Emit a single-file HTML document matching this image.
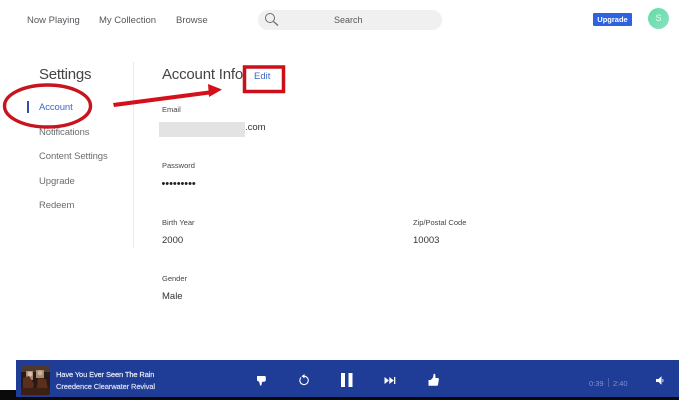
<!DOCTYPE html>
<html>
<head>
<meta charset="utf-8">
<style>
html,body{margin:0;padding:0;background:#fff}
body{width:679px;height:400px;position:relative;overflow:hidden;font-family:"Liberation Sans",sans-serif}
#w{position:absolute;left:0;top:0;width:679px;height:400px;background:#fff;filter:blur(.35px)}
.t{position:absolute;white-space:nowrap;line-height:1}
.nav{font-size:9.5px;color:#55585c;top:16px}
.side{font-size:9.5px;color:#6a6d70;left:39px;letter-spacing:-.1px}
.lab{font-size:7.5px;color:#444;left:162px}
.val{font-size:9.5px;color:#333}
svg{position:absolute;left:0;top:0}
</style>
</head>
<body>
<div id="w">
<div class="t nav" style="left:27px">Now Playing</div>
<div class="t nav" style="left:99px">My Collection</div>
<div class="t nav" style="left:176px">Browse</div>

<div style="position:absolute;left:258px;top:10px;width:184px;height:20px;border-radius:10px;background:#f0f0f1"></div>
<div class="t" style="left:334px;top:16px;font-size:9px;color:#55585c">Search</div>

<div class="t" style="left:593px;top:12.500px;width:39px;height:13px;background:#2f62e0;border-radius:1px;color:#fff;font-size:7.500px;font-weight:bold;text-align:center;line-height:13px">Upgrade</div>
<div class="t" style="left:648px;top:8px;width:21px;height:21px;border-radius:50%;background:linear-gradient(135deg,#66dba8,#88e2bf);color:#e8fbf2;font-size:9px;text-align:center;line-height:21px">S</div>

<div class="t" style="left:39px;top:67px;font-size:15px;color:#444;letter-spacing:-.25px">Settings</div>
<div class="t" style="left:162px;top:67px;font-size:15px;color:#444;letter-spacing:-.2px">Account Info</div>
<div class="t" style="left:254px;top:72px;font-size:9.500px;color:#3b68c8">Edit</div>
<div style="position:absolute;left:133px;top:62px;width:1px;height:186px;background:#ececec"></div>

<div style="position:absolute;left:27px;top:101px;width:1.500px;height:12px;background:#2f4fa8"></div>
<div class="t side" style="top:103px;color:#3b68c8">Account</div>
<div class="t side" style="top:128px">Notifications</div>
<div class="t side" style="top:152px">Content Settings</div>
<div class="t side" style="top:177px">Upgrade</div>
<div class="t side" style="top:201px">Redeem</div>

<div class="t lab" style="top:105.500px">Email</div>
<div style="position:absolute;left:159px;top:122px;width:86px;height:15px;background:#e3e3e3"></div>
<div class="t val" style="left:245px;top:123px">.com</div>
<div class="t lab" style="top:162px">Password</div>
<div class="t val" style="left:161.500px;top:179px;font-size:11px;letter-spacing:-.05px;color:#222">•••••••••</div>
<div class="t lab" style="top:218.500px">Birth Year</div>
<div class="t val" style="left:162px;top:236px">2000</div>
<div class="t lab" style="left:413px;top:218.500px">Zip/Postal Code</div>
<div class="t val" style="left:413px;top:236px">10003</div>
<div class="t lab" style="top:274.500px">Gender</div>
<div class="t val" style="left:162px;top:292px">Male</div>

<div style="position:absolute;left:0;top:390px;width:679px;height:10px;background:#0a0a0a"></div>
<div style="position:absolute;left:16px;top:360px;width:663px;height:37px;background:#1f3c96"></div>
<div class="t" style="left:56px;top:370.500px;font-size:7.500px;letter-spacing:-.12px;color:#f2f4fb;-webkit-text-stroke:.15px #f2f4fb">Have You Ever Seen The Rain</div>
<div class="t" style="left:56px;top:383px;font-size:7.500px;letter-spacing:-.1px;color:#dfe5f6;-webkit-text-stroke:.15px #dfe5f6">Creedence Clearwater Revival</div>
<div class="t" style="left:589px;top:379.500px;font-size:7.500px;color:#7f92c8">0:39</div>
<div style="position:absolute;left:608px;top:378px;width:1px;height:9px;background:#4a64b0"></div>
<div class="t" style="left:613px;top:379.500px;font-size:7.500px;color:#7f92c8">2:40</div>

<svg width="679" height="400" viewBox="0 0 679 400">
  <!-- album art -->
  <rect x="21" y="366" width="29" height="29" fill="#2a1a14"/>
  <path d="M21 366h29v6H21z" fill="#4d3a2c"/>
  <path d="M26 371h7v9h-7zM36 370h8v8h-8z" fill="#a88a72"/>
  <path d="M23 378l6-2 5 8-3 11h-8zM38 378l8 1 3 16H36z" fill="#5a2f1e"/>
  <circle cx="30" cy="374" r="2.500" fill="#d8c0a8"/>
  <circle cx="40" cy="373" r="2.500" fill="#cdb29a"/>
  <path d="M21 388h29v7H21z" fill="#3c2013"/>
  <!-- search icon -->
  <circle cx="270" cy="18" r="4.500" fill="none" stroke="#6a6d70" stroke-width="1"/>
  <path d="M273.500 21.500L278 25.500" stroke="#6a6d70" stroke-width="1.200" fill="none"/>
  <!-- annotation -->
  <ellipse cx="47.500" cy="106" rx="43" ry="21" fill="none" stroke="#c8141c" stroke-width="3.400"/>
  <path d="M113 103L209 90.500L209.500 94.500L114 107Z" fill="#d5101a"/>
  <path d="M208 84L222 89.500L209 97Z" fill="#d5101a"/>
  <rect x="244.500" y="67" width="39" height="24.500" fill="none" stroke="#cc0f18" stroke-width="3.500"/>
  <!-- dislike -->
  <path d="M257 376h7.500c.8 0 1.300.6 1.300 1.300v2.700c0 1-.8 1.700-1.700 1.700h-1.900l-.8 3.300c-.2.800-1.300.8-1.500 0l-.6-3-2.300-1.500z" fill="#fff"/>
  <!-- replay -->
  <path d="M301 377.500a4.200 4.200 0 1 0 3.300-1.300" fill="none" stroke="#fff" stroke-width="1.100"/>
  <path d="M304.500 374v4.400l-3-2.200z" fill="#fff"/>
  <!-- pause -->
  <rect x="341" y="373" width="4" height="14" fill="#fff"/>
  <rect x="348.500" y="373" width="4" height="14" fill="#fff"/>
  <!-- skip -->
  <path d="M384.500 377l4.500 3.500-4.500 3.500zM389.300 377l4.500 3.500-4.500 3.500z" fill="#fff"/>
  <rect x="394" y="377" width="1.300" height="7" fill="#fff"/>
  <!-- like -->
  <path d="M428.500 380h2.200l2.300-2.500.6-3.200c.2-.8 1.500-.6 1.700.4l.2 3.300h2.300c.8 0 1.200.6 1.100 1.300l-.9 5.400c-.1.700-.6 1.100-1.300 1.100h-8.200z" fill="#fff"/>
  <!-- volume -->
  <path d="M656 379h2.500l3-2.700v8.400l-3-2.700H656z" fill="#fff"/>
  <path d="M662.500 379c.8.800.8 2.200 0 3" stroke="#fff" stroke-width=".8" fill="none"/>
</svg>
</div>
</body>
</html>
